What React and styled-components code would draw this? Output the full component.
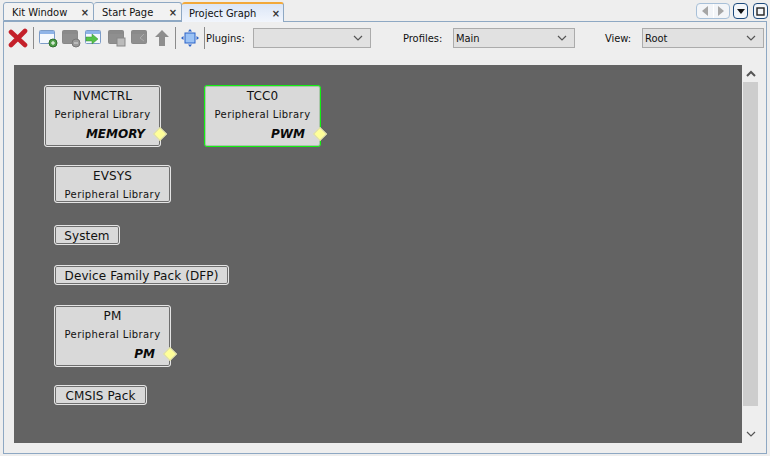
import React from "react";
import styled, { createGlobalStyle } from "styled-components";

const Global = createGlobalStyle`
  html, body { margin: 0; padding: 0; background: #eeeeee; }
  body { font-family: "DejaVu Sans", sans-serif; }
  #root { width: 770px; height: 456px; overflow: hidden; }
`;
const UI = `"DejaVu Sans Condensed", "DejaVu Sans", sans-serif`;
const Window = styled.div`
  width: 770px; height: 456px; display: flex; flex-direction: column;
  background: #eeeeee; font-family: ${UI}; font-stretch: condensed; color: #111;
`;
const TabBar = styled.div`
  height: 21px; display: flex; align-items: flex-end; padding-left: 3px; position: relative; z-index: 1;
`;
const Tab = styled.div`
  box-sizing: border-box; width: ${p => p.$w}px; height: ${p => p.$active ? 20 : 19}px;
  margin-bottom: ${p => p.$active ? -1 : 0}px;
  display: flex; align-items: center; justify-content: space-between;
  padding: ${p => p.$active ? 0 : 2}px ${p => p.$active ? 3 : 4}px 0 ${p => p.$lead}px;
  font-size: 11px;
  border: 1px solid #8ea8c3; border-bottom: ${p => p.$active ? "none" : "1px solid #8ea8c3"};
  border-radius: 3px 3px 0 0; border-left-width: ${p => p.$first ? 1 : 0}px;
  background: ${p => p.$active ? "linear-gradient(#dbe6f7, #f1f5fc)" : "#f2f2f2"};
  border-top: ${p => p.$active ? "2px solid #f2a93b" : "1px solid #8ea8c3"};
`;
const Close = styled.span`font-size: 11px; font-weight: 700; color: #333; line-height: 1; font-family: "DejaVu Sans", sans-serif;`;
const WinControls = styled.div`
  position: absolute; right: 2px; top: 3px; display: flex; gap: 5px;
`;
const Nav = styled.div`
  box-sizing: border-box; width: 34px; height: 16px; margin-right: -2px; border: 1px solid #a8c0d8; border-radius: 4px; display: flex; background: #f3f5f8;
`;
const NavHalf = styled.div`
  flex: 1; display: flex; align-items: center; justify-content: center;
  & + & { border-left: 1px solid #fff; }
`;
const WinBtn = styled.div`
  box-sizing: border-box; width: 15px; height: 16px; border: 1px solid #1d4a7c; border-radius: 4px; background: #f4f6f9;
  display: flex; align-items: center; justify-content: center;
`;
const Panel = styled.div`
  flex: 1; margin: 0 3px 2px 3px; border: 1px solid #8ea8c3; display: flex; flex-direction: column; min-height: 0;
  box-sizing: border-box;
`;
const Toolbar = styled.div`
  height: 32px; box-sizing: border-box; padding: 0 0 0 4px; display: flex; align-items: center;
`;
const IconSlot = styled.div`
  box-sizing: border-box; width: ${p => p.$w || 23}px; height: 24px; padding-right: ${p => p.$pr || 0}px;
  display: flex; align-items: center; justify-content: center; flex: none;
`;
const Sep = styled.div`
  width: 1px; height: 22px; background: #8b8b8b; margin: 0 2px; flex: none;
`;
const Label = styled.span`
  font-size: 11px; margin-left: ${p => p.$ml || 0}px; width: ${p => p.$w}px; flex: none;
`;
const Select = styled.div`
  box-sizing: border-box; width: ${p => p.$w}px; height: 20px; flex: none;
  border: 1px solid #ababab; background: #e1e1e1; display: flex; align-items: center; justify-content: space-between;
  padding: 0 7px 0 2px; font-size: 11px;
`;
const SelectValue = styled.span``;
const Body = styled.div`
  flex: 1; display: flex; min-height: 0; padding: 11px 0 10px 10px;
`;
const Canvas = styled.div`
  position: relative; width: 728px; background: #636363; flex: none;
`;
const Scrollbar = styled.div`
  width: 15px; margin-left: 1px; display: flex; flex-direction: column; align-items: center; justify-content: space-between;
`;
const Arrow = styled.div`height: 17px; display: flex; align-items: center; justify-content: center;`;
const Track = styled.div`flex: 1; width: 15px; background: #cdcdcd; margin-bottom: 20px;`;
const Node = styled.div`
  position: absolute; box-sizing: border-box; left: ${p => p.$x}px; top: ${p => p.$y}px;
  width: ${p => p.$w}px; height: ${p => p.$h}px;
  background: #d9d9d9; border-radius: 3px;
  border: 1px solid ${p => p.$sel ? "#12ee12" : "#e4e4e4"};
  box-shadow: inset 0 0 0 1px ${p => p.$sel ? "#a9c4a9" : "#6e6e6e"};
  text-align: center; white-space: nowrap;
`;
const Title = styled.div`
  font-family: "DejaVu Sans", sans-serif; font-stretch: normal; font-size: 12px; letter-spacing: 0.1px;
  line-height: 14px; padding-top: 3px; color: #111;
`;
const Sub = styled.div`
  font-family: "DejaVu Sans", sans-serif; font-stretch: normal; font-size: 10px; letter-spacing: 0.4px; line-height: 12px; margin-top: 6px; color: #111;
`;
const Kind = styled.div`
  position: absolute; right: 15px; bottom: 5px; font-family: "DejaVu Sans", sans-serif; font-stretch: normal;
  font-weight: 700; font-style: italic; font-size: 12px; line-height: 14px; color: #0a0a0a;
`;
const Port = styled.div`
  position: absolute; right: -5px; bottom: 7px; width: 8px; height: 8px; transform: rotate(45deg);
  background: #ffff99; border: 1px solid #d8d8b0;
`;
const nodes = [
  { t: "NVMCTRL", x: 30, y: 20, w: 117, h: 62, sub: 1, kind: "MEMORY" },
  { t: "TCC0", x: 190, y: 20, w: 117, h: 62, sub: 1, kind: "PWM", sel: 1 },
  { t: "EVSYS", x: 40, y: 100, w: 117, h: 38, sub: 1 },
  { t: "System", x: 40, y: 160, w: 66, h: 20 },
  { t: "Device Family Pack (DFP)", x: 40, y: 200, w: 175, h: 20 },
  { t: "PM", x: 40, y: 240, w: 117, h: 62, sub: 1, kind: "PM" },
  { t: "CMSIS Pack", x: 40, y: 320, w: 93, h: 20 },
];
const Win = ({ children, head = "#8fb4e8", body = "#f4f8fe", border = "#7c9cc8" }) => (
  <svg width="20" height="20" viewBox="0 0 20 20">
    <rect x="1.5" y="2.5" width="15" height="13" rx="1" fill={body} stroke={border} />
    <rect x="2" y="3" width="14" height="3" fill={head} />
    {children}
  </svg>
);
const Chevron = ({ up, color = "#555", w = 10 }) => (
  <svg width={w} height="7" viewBox="0 0 10 7">
    <path d={up ? "M1 6 L5 2 L9 6" : "M1 1 L5 5 L9 1"} fill="none" stroke={color} strokeWidth={up ? 2 : 1.2} />
  </svg>
);
const Tri = ({ d, fill, w = 10, h = 10 }) => (
  <svg width={w} height={h} viewBox="0 0 10 10"><path d={d} fill={fill} /></svg>
);
export default function App() {
  return (
    <Window>
      <Global />
      <TabBar>
        <Tab $w={91} $first $lead={8}>Kit Window<Close>×</Close></Tab>
        <Tab $w={88} $lead={8}>Start Page<Close>×</Close></Tab>
        <Tab $w={102} $lead={7} $active>Project Graph<Close>×</Close></Tab>
        <WinControls>
          <Nav>
            <NavHalf><Tri d="M8 0 V10 L2 5Z" fill="#a6a6a6" /></NavHalf>
            <NavHalf><Tri d="M2 0 V10 L8 5Z" fill="#a6a6a6" /></NavHalf>
          </Nav>
          <WinBtn><Tri d="M1 3 H9 L5 8Z" fill="#111" /></WinBtn>
          <WinBtn><svg width="9" height="9"><rect x="1" y="1" width="7" height="7" fill="none" stroke="#222" strokeWidth="1.4" /></svg></WinBtn>
        </WinControls>
      </TabBar>
      <Panel>
        <Toolbar>
          <IconSlot $pr={3}>
            <svg width="20" height="20" viewBox="0 0 20 20"><path d="M3 4 L17 17 M17 3 L3 17" stroke="#c4202a" strokeWidth="4.6" strokeLinecap="round" /></svg>
          </IconSlot>
          <Sep />
          <IconSlot>
            <Win><circle cx="15" cy="15" r="4" fill="#4f9e48" stroke="#2e6e2e" /><path d="M13 15 H17 M15 13 V17" stroke="#fff" /></Win>
          </IconSlot>
          <IconSlot>
            <Win head="#8a8a8a" body="#8f8f8f" border="#888"><circle cx="15" cy="15" r="4" fill="#9a9a9a" stroke="#777" /><path d="M13 15 H17" stroke="#ddd" /></Win>
          </IconSlot>
          <IconSlot>
            <Win><path d="M2 9 H8 V6 L14 11 L8 16 V13 H2Z" fill="#55c24a" stroke="#3b8f35" strokeWidth="0.5" /></Win>
          </IconSlot>
          <IconSlot>
            <Win head="#8a8a8a" body="#8f8f8f" border="#888"><rect x="10" y="10" width="8" height="8" fill="#bbb" stroke="#888" /></Win>
          </IconSlot>
          <IconSlot>
            <Win head="#8a8a8a" body="#8f8f8f" border="#888"><path d="M14 6 L10 10 L14 13" fill="none" stroke="#aaa" /></Win>
          </IconSlot>
          <IconSlot $w={22}>
            <svg width="16" height="18" viewBox="0 0 16 18"><path d="M8 1 L15 8 H11 V17 H5 V8 H1Z" fill="#8e8e8e" /></svg>
          </IconSlot>
          <Sep />
          <IconSlot $w={24}>
            <svg width="20" height="20" viewBox="0 0 20 20">
              <rect x="5" y="5" width="10" height="10" fill="#9cc3f5" stroke="#2a62c8" />
              <path d="M10 1 L8 3.5 H12Z M10 19 L8 16.5 H12Z M1 10 L3.5 8 V12Z M19 10 L16.5 8 V12Z" fill="#2a62c8" />
            </svg>
          </IconSlot>
          <Sep />
          <Label $ml={-1} $w={47}>Plugins:</Label>
          <Select $w={118}><SelectValue /><Chevron /></Select>
          <Label $ml={32} $w={50}>Profiles:</Label>
          <Select $w={122}>Main<Chevron /></Select>
          <Label $ml={30} $w={37}>View:</Label>
          <Select $w={122}>Root<Chevron /></Select>
        </Toolbar>
        <Body>
          <Canvas>
            {nodes.map(n => (
              <Node key={n.t} $x={n.x} $y={n.y} $w={n.w} $h={n.h} $sel={n.sel}>
                <Title>{n.t}</Title>
                {n.sub && <Sub>Peripheral Library</Sub>}
                {n.kind && <Kind>{n.kind}</Kind>}
                {n.kind && <Port />}
              </Node>
            ))}
          </Canvas>
          <Scrollbar>
            <Arrow><Chevron up /></Arrow>
            <Track />
            <Arrow><Chevron /></Arrow>
          </Scrollbar>
        </Body>
      </Panel>
    </Window>
  );
}
